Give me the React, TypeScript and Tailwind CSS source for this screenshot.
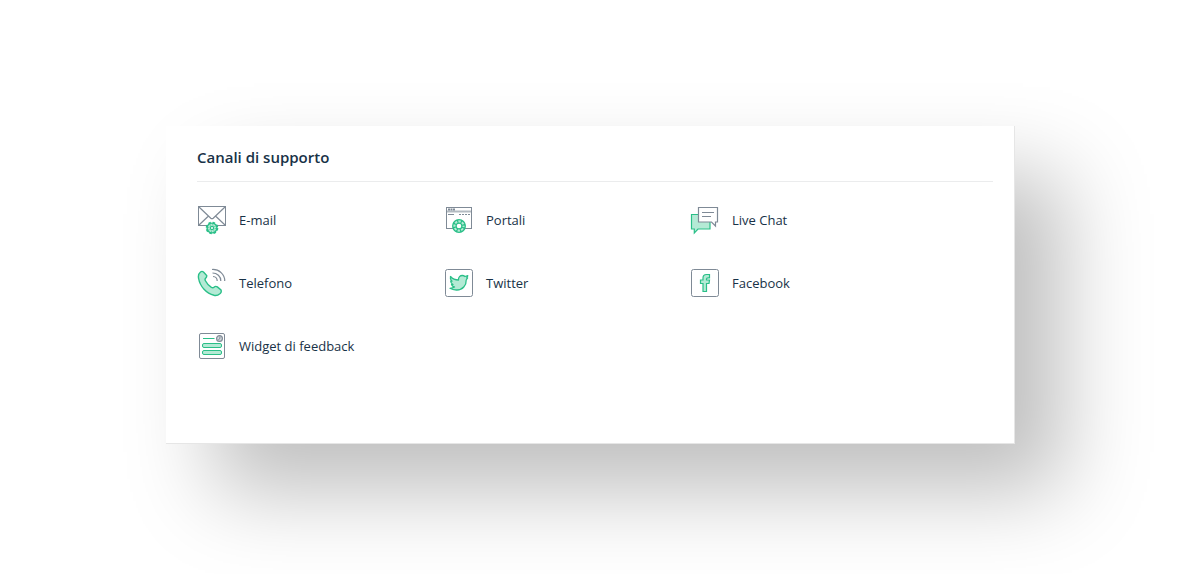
import React from "react";

interface Channel {
  name: string;
  icon: React.ReactNode;
}

const GRAY = "#7f8a96";
const GREEN = "#2abf88";
const LIGHT = "#b4ead5";

function IconBox({ children }: { children: React.ReactNode }) {
  return (
    <svg
      viewBox="0 0 30 30"
      fill="none"
      className="w-[30px] h-[30px] shrink-0"
      aria-hidden="true"
    >
      {children}
    </svg>
  );
}

const channels: Channel[] = [
  {
    name: "E-mail",
    icon: (
      <IconBox>
        <g stroke={GRAY}>
          <rect x="1.5" y="1.5" width="27" height="19" fill="#fff" />
          <path d="M2 2l11.8 11.2q1.2 1 2.4 0L28 2M2 20l9.5-9M28 20l-9.5-9" strokeWidth="1.2" />
        </g>
        <circle cx="15" cy="23" r="4.9" fill={LIGHT} stroke={GREEN} strokeWidth="1.4" />
        <circle cx="15" cy="23" r="5.4" stroke={GREEN} strokeWidth="1.8" strokeDasharray="2.4 1.841" />
        <circle cx="15" cy="23" r="3.3" stroke={GREEN} strokeWidth="1" strokeDasharray="1 1.592" />
        <circle cx="15" cy="23" r="1.6" fill="#fff" stroke={GREEN} strokeWidth="1.2" />
      </IconBox>
    ),
  },
  {
    name: "Portali",
    icon: (
      <IconBox>
        <rect x="2.5" y="2.5" width="25" height="21" fill="#fff" stroke={GRAY} />
        <path d="M3 6.5h24" stroke="#b3bac1" strokeWidth="2" />
        <path d="M4 4.5h7" stroke={GRAY} strokeWidth="2" strokeDasharray="2 .5" />
        <path d="M4 9.5h6M15 9.5h2M18 9.5h2M21 9.5h2M24 9.5h2" stroke={GRAY} />
        <circle cx="15" cy="21" r="4.6" stroke={LIGHT} strokeWidth="4" />
        <circle cx="15" cy="21" r="4.6" stroke={GREEN} strokeWidth="3.6" strokeDasharray="1.2 2.413" strokeDashoffset="2.4" />
        <circle cx="15" cy="21" r="6.3" stroke={GREEN} strokeWidth="1.3" />
        <circle cx="15" cy="21" r="2.9" fill="#fff" stroke={GREEN} strokeWidth="1.2" />
      </IconBox>
    ),
  },
  {
    name: "Live Chat",
    icon: (
      <IconBox>
        <path
          d="M1.5 9.5h18.5v14.5H8l-3.7 4v-4H1.5z"
          fill={LIGHT}
          stroke={GREEN}
          strokeWidth="1.2"
        />
        <path d="M8.5 2.5h19v14.5h-2v4l-4-4H8.5z" fill="#fff" stroke={GRAY} strokeWidth="1.2" />
        <path d="M12 7.5h12M12 11.5h9" stroke={GRAY} strokeWidth="1.2" />
      </IconBox>
    ),
  },
  {
    name: "Telefono",
    icon: (
      <IconBox>
        <path
          d="M3.5 4Q5 2.8 6.5 4L9.7 7.5Q10 9 8.6 10.2Q7.6 11.2 8.4 12.8C9.7 15.4 11.6 17.6 14.4 19.4Q16 20.2 17 19.2Q18.6 17.7 20.3 18.9L24 22Q24.8 24 23.2 25.5Q20 28.2 17 27.3C9.5 25.5 3 18.5 1.6 10.5C1 7.5 2 5.2 3.5 4Z"
          fill={LIGHT}
          stroke={GREEN}
          strokeWidth="1.4"
        />
        <path
          d="M15 1.5C22 1 28 6.5 27.7 13M15.5 5C20 5 24 8.5 23.8 13M16 8.5C18.5 8.7 20.2 10.5 20.2 13"
          stroke={GRAY}
          strokeWidth="1.2"
        />
      </IconBox>
    ),
  },
  {
    name: "Twitter",
    icon: (
      <IconBox>
        <rect x="1.5" y="1.5" width="27" height="27" rx="2" stroke={GRAY} />
        <path
          d="M6.5 8.5C8.5 10.8 11.5 12 14.5 12C14.2 9 16.2 7.5 18.3 7.5Q19.8 7.5 21 8.5L23.8 7.7L22.7 10L23.6 10L22.2 12C22.5 17.5 18.5 22 13 22Q9 22.2 6 20.3Q8.8 20.2 10.5 19Q8 18.5 7.5 16.7L9 16.5Q6.7 15.3 6.7 13L8 13.2Q5.7 11 6.5 8.5Z"
          fill={LIGHT}
          stroke={GREEN}
          strokeWidth="1.3"
          strokeLinejoin="round"
        />
      </IconBox>
    ),
  },
  {
    name: "Facebook",
    icon: (
      <IconBox>
        <rect x="1.5" y="1.5" width="27" height="27" rx="2" stroke={GRAY} />
        <path
          d="M13 23.5V15.5H10.5V12H13V10Q13 6.5 16.5 6.5H19.5V9.8H18Q16.5 9.8 16.5 11V12H19.5L19 15.5H16.5V23.5Z"
          fill={LIGHT}
          stroke={GREEN}
          strokeWidth="1.2"
        />
      </IconBox>
    ),
  },
  {
    name: "Widget di feedback",
    icon: (
      <IconBox>
        <rect x="2.5" y="2.5" width="25" height="25" rx="1.5" stroke={GRAY} />
        <path d="M6 7.5h11.5" stroke={GREEN} />
        <circle cx="22.5" cy="7.5" r="2.9" fill="#d5d9dd" stroke={GRAY} strokeWidth="1.2" />
        <path d="M22.9 5.5v2.2l-1.6 1" stroke={GRAY} />
        <rect x="5.5" y="12.5" width="19" height="4" rx="1.5" fill={LIGHT} stroke={GREEN} />
        <rect x="5.5" y="19.5" width="19" height="4" rx="1.5" fill={LIGHT} stroke={GREEN} />
      </IconBox>
    ),
  },
];

function App() {
  return (
    <main className="min-h-screen overflow-hidden bg-white pt-[126px] pb-[130px] pl-[166px] pr-[176px] font-['Open_Sans',sans-serif] text-[#183247]">
      <section className="bg-white border-r border-b border-[#e6e6e6] pt-[19px] pb-[82px] pl-[31px] pr-[21px] shadow-[48px_48px_80px_rgba(0,0,0,0.25)]">
        <h2 className="border-b border-[#ebeced] pb-3 text-[15px] leading-6 font-semibold">
          Canali di supporto
        </h2>
        <ul className="grid grid-cols-[247px_246px_1fr] gap-y-[33px] pt-[23px]">
          {channels.map((channel) => (
            <li key={channel.name} className="flex items-center gap-3">
              {channel.icon}
              <span className="text-[13px] leading-5">{channel.name}</span>
            </li>
          ))}
        </ul>
      </section>
    </main>
  );
}

export default App;
